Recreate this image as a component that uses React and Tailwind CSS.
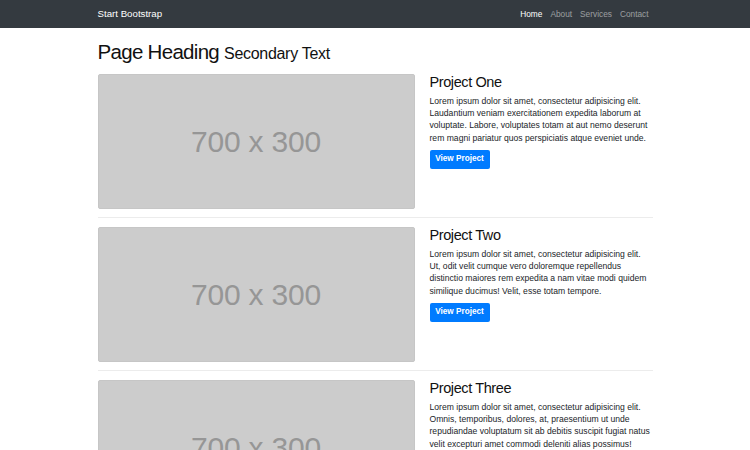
import React from "react";

const projects = [
  {
    title: "Project One",
    text: "Lorem ipsum dolor sit amet, consectetur adipisicing elit. Laudantium veniam exercitationem expedita laborum at voluptate. Labore, voluptates totam at aut nemo deserunt rem magni pariatur quos perspiciatis atque eveniet unde.",
  },
  {
    title: "Project Two",
    text: "Lorem ipsum dolor sit amet, consectetur adipisicing elit. Ut, odit velit cumque vero doloremque repellendus distinctio maiores rem expedita a nam vitae modi quidem similique ducimus! Velit, esse totam tempore.",
  },
  {
    title: "Project Three",
    text: "Lorem ipsum dolor sit amet, consectetur adipisicing elit. Omnis, temporibus, dolores, at, praesentium ut unde repudiandae voluptatum sit ab debitis suscipit fugiat natus velit excepturi amet commodi deleniti alias possimus!",
  },
];

function Row({ p, last }) {
  return (
    <div>
      <div className="flex gap-[15px]">
        <div className="w-[317px] h-[135px] shrink-0 bg-[#cccccc] rounded-[2px] border border-[#c6c6c6] flex items-center justify-center">
          <span className="text-[30px] text-[#969696] leading-none tracking-[-0.2px]">700 x 300</span>
        </div>
        <div className="flex-1">
          <h3 className="text-[14.5px] leading-[17px] text-[#111] mb-[4px] tracking-[-0.4px]">{p.title}</h3>
          <p className="text-[8.6px] leading-[12.2px] text-[#212529] mb-[6px]">{p.text}</p>
          <button className="block bg-[#007bff] text-white text-[8.2px] font-semibold h-[19px] w-[60px] rounded-[2px] leading-none">
            View Project
          </button>
        </div>
      </div>
      {!last && <div className="h-px bg-[#ececec] mt-[8px] mb-[9px]" />}
    </div>
  );
}

export default function App() {
  return (
    <div className="h-[450px] overflow-hidden bg-white" style={{ fontFamily: '"Liberation Sans", Arial, sans-serif' }}>
      <nav className="h-[28px] bg-[#343a40]">
        <div className="w-[555px] mx-auto h-full flex items-center justify-between">
          <span className="text-white text-[9.7px]">Start Bootstrap</span>
          <div className="flex text-[8.3px]">
            <span className="px-[4px] text-white">Home</span>
            <span className="px-[4px] text-white/50">About</span>
            <span className="px-[4px] text-white/50">Services</span>
            <span className="px-[4px] text-white/50">Contact</span>
          </div>
        </div>
      </nav>
      <div className="w-[555px] mx-auto">
        <h1 className="text-[20.5px] leading-[24px] text-[#111] mt-[12px] mb-[8px] tracking-[-0.7px]">
          Page Heading <span className="text-[16px] tracking-[-0.3px]">Secondary Text</span>
        </h1>
        {projects.map((p, i) => (
          <Row key={i} p={p} last={i === projects.length - 1} />
        ))}
      </div>
    </div>
  );
}
